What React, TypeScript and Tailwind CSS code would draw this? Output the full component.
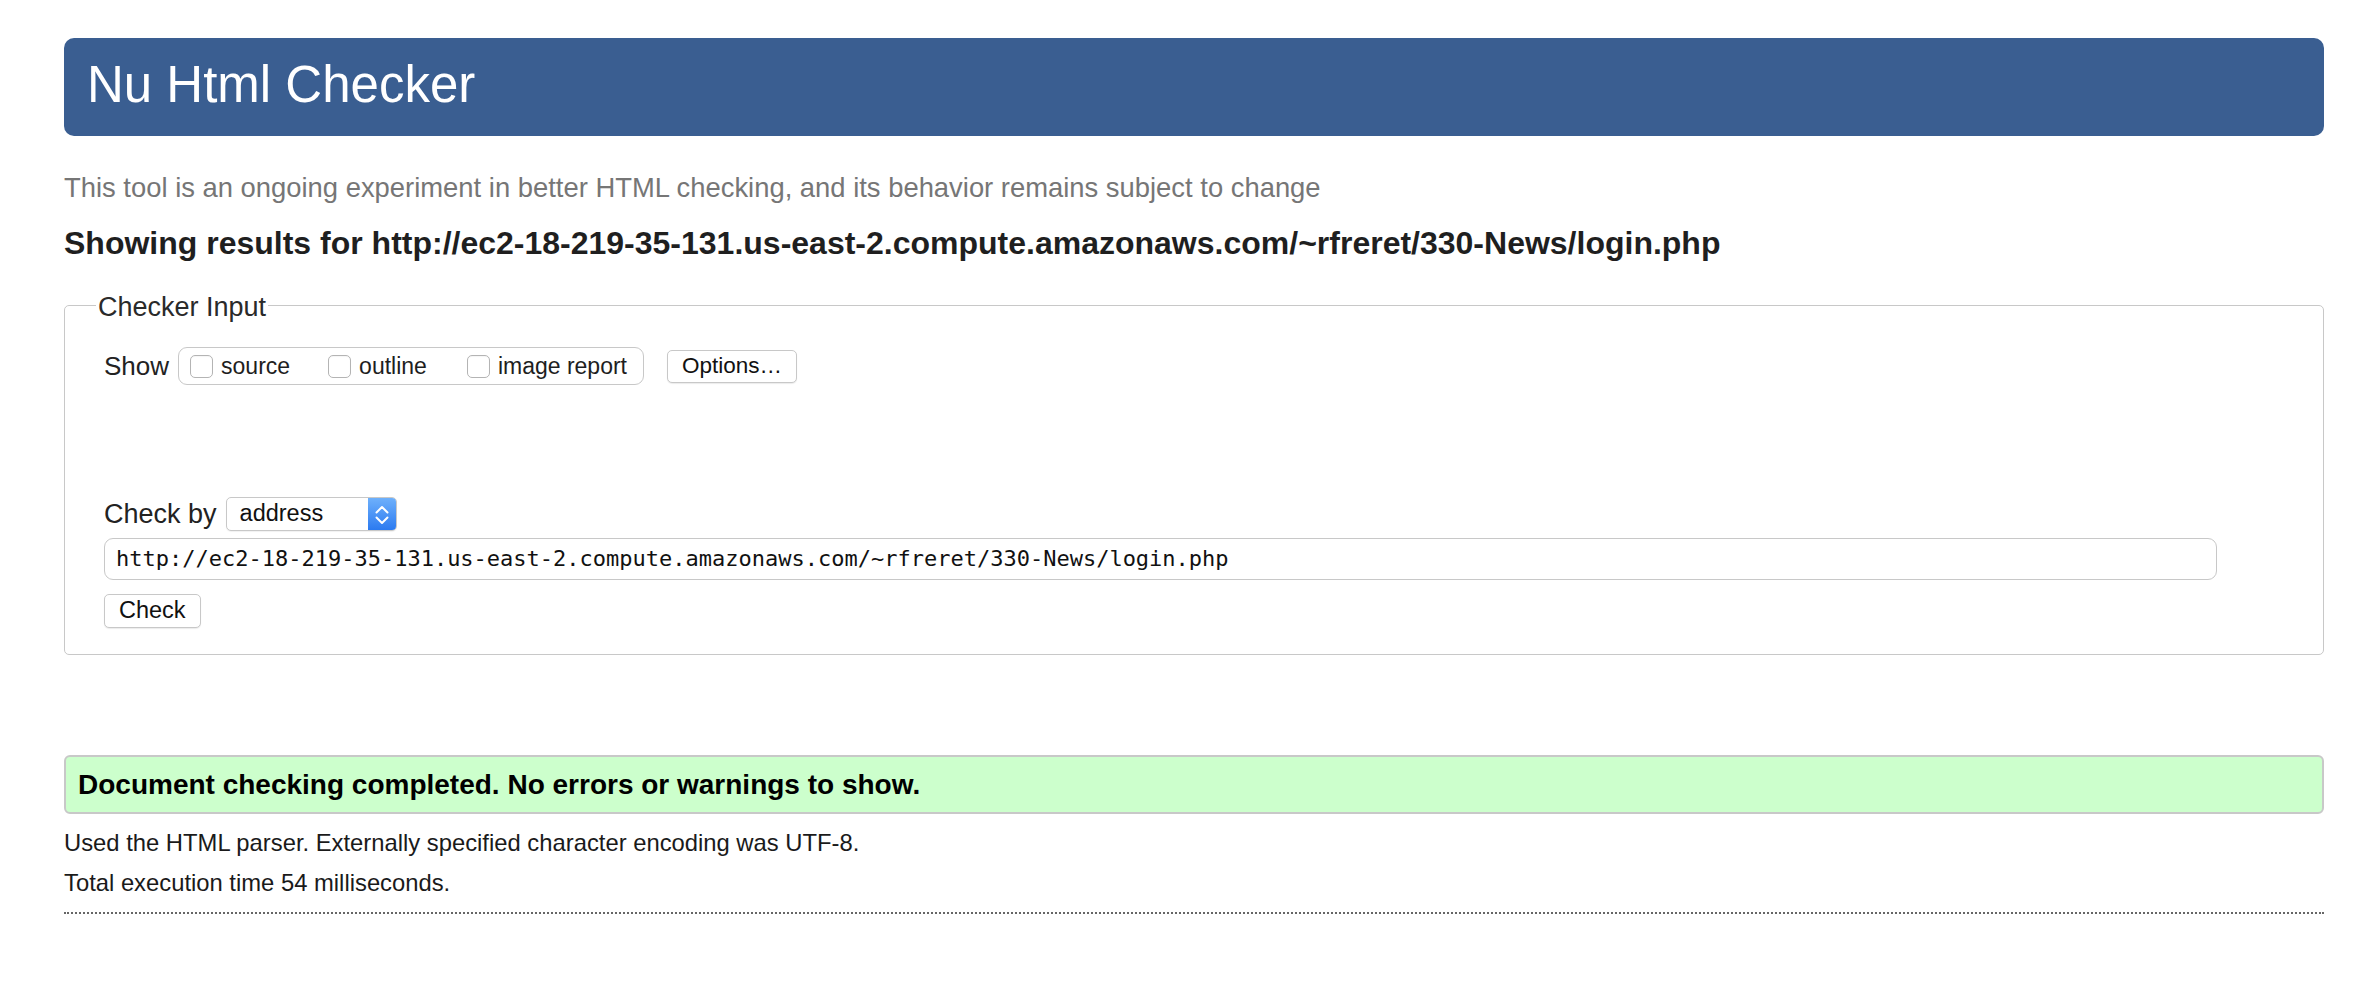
import React from 'react';

const Checkbox: React.FC<{ label: string; className?: string }> = ({ label, className }) => (
  <label className={`flex items-center gap-[8px] ${className ?? ''}`}>
    <span className="block w-[23px] h-[23px] rounded-[5px] border border-[#b4b4b4] bg-white shadow-[inset_0_1px_1px_rgba(0,0,0,0.04)]" />
    <span className="text-[23px] leading-none text-[#1e1e1e]">{label}</span>
  </label>
);

const SelectArrows = () => (
  <svg width="28" height="33" viewBox="0 0 28 33" fill="none">
    <path d="M8.5 14.5L14 9L19.5 14.5" stroke="white" strokeWidth="2" strokeLinecap="round" strokeLinejoin="round" />
    <path d="M8.5 19.5L14 25L19.5 19.5" stroke="white" strokeWidth="2" strokeLinecap="round" strokeLinejoin="round" />
  </svg>
);

export default function App() {
  const url = 'http://ec2-18-219-35-131.us-east-2.compute.amazonaws.com/~rfreret/330-News/login.php';

  return (
    <div className="min-h-[994px] bg-white font-['Liberation_Sans',Arial,sans-serif] text-[#222]">
      <div className="ml-[64px] mr-[50px] pt-[38px]">
        {/* Title bar */}
        <div className="h-[98px] rounded-[10px] bg-[#3a5e91] pl-[23px] pt-[21px]">
          <h1 className="text-[51px] leading-none text-white">Nu Html Checker</h1>
        </div>

        <p className="mt-[37px] text-[27.4px] leading-[30px] text-[#767676]">
          This tool is an ongoing experiment in better HTML checking, and its behavior remains subject to change
        </p>

        <p className="mt-[22px] text-[32px] leading-[36px] font-bold text-[#1f1f1f]">
          Showing results for {url}
        </p>

        {/* Checker input */}
        <fieldset className="mt-[27px] rounded-[5px] border border-[#c8c8c8] pl-[31px] pb-[26px]">
          <legend className="px-[2px] pt-[4px] text-[27px] leading-[30px] text-[#2a2a2a]">Checker Input</legend>

          <div className="pl-[8px]">
            <div className="mt-[25px] flex h-[38px] items-center">
              <span className="text-[26px] leading-none">Show</span>
              <div className="ml-[9px] flex h-[38px] w-[466px] items-center rounded-[9px] border border-[#c8c8c8] pl-[11px]">
                <Checkbox label="source" />
                <Checkbox label="outline" className="ml-[38px]" />
                <Checkbox label="image report" className="ml-[40px]" />
              </div>
              <button className="ml-[23px] h-[33px] rounded-[5px] border border-[#c8c8c8] bg-white px-[14px] text-[22.5px] leading-none text-[#111] shadow-[0_1px_1px_rgba(0,0,0,0.08)]">
                Options…
              </button>
            </div>

            <div className="mt-[112px] flex h-[34px] items-center">
              <span className="text-[27px] leading-none">Check by</span>
              <div className="ml-[9px] flex h-[34px] w-[171px] items-center overflow-hidden rounded-[5px] border border-[#c8c8c8] bg-white shadow-[0_1px_1px_rgba(0,0,0,0.06)]">
                <span className="flex-1 pl-[13px] text-[23.5px] leading-none text-[#111]">address</span>
                <span className="flex h-full w-[28px] items-center justify-center bg-gradient-to-b from-[#6eb0fb] to-[#2b7af0]">
                  <SelectArrows />
                </span>
              </div>
            </div>

            <div className="mt-[7px] flex h-[42px] w-[2113px] items-center rounded-[9px] border-[1.5px] border-[#c8c8c8] pl-[11px]">
              <span className="whitespace-nowrap font-['DejaVu_Sans_Mono',Menlo,monospace] text-[22px] leading-none text-[#111]">
                {url}
              </span>
            </div>

            <button className="mt-[14px] h-[34px] rounded-[5px] border border-[#c8c8c8] bg-white px-[14px] text-[23.5px] leading-none text-[#111] shadow-[0_1px_1px_rgba(0,0,0,0.08)]">
              Check
            </button>
          </div>
        </fieldset>

        {/* Result */}
        <div className="mt-[100px] h-[59px] rounded-[6px] border-2 border-[#c8c8c8] bg-[#ccffcc] pl-[12px] pt-[12px]">
          <p className="text-[28px] leading-[32px] font-bold text-black">
            Document checking completed. No errors or warnings to show.
          </p>
        </div>

        <p className="mt-[9px] text-[23.8px] leading-[40px] text-[#1a1a1a]">
          Used the HTML parser. Externally specified character encoding was UTF-8.
        </p>
        <p className="text-[23.8px] leading-[40px] text-[#1a1a1a]">Total execution time 54 milliseconds.</p>

        <hr className="mt-[9px] border-0 border-t-2 border-dotted border-[#666]" />
      </div>
    </div>
  );
}
